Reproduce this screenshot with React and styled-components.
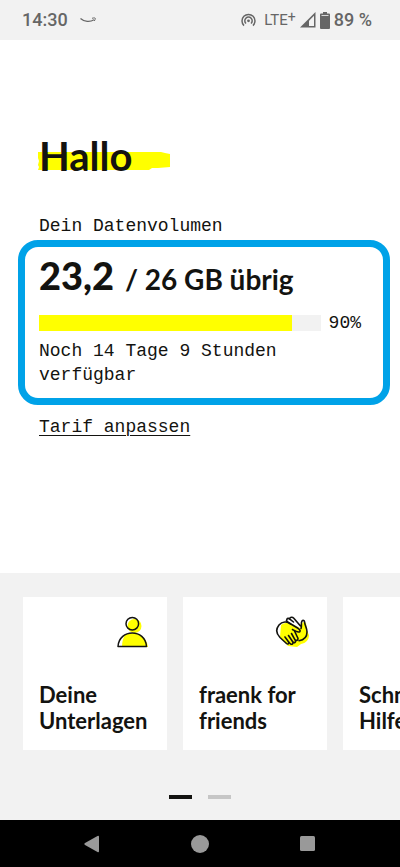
import React, { useState } from 'react'
import styled, { createGlobalStyle } from 'styled-components'

const colors = {
    ink: '#131310',
    brand: '#ffff00',
    grey: '#f2f2f2',
    status: '#666666',
    frame: '#00a2e8',
    nav: '#999999'
}

const display = `Lato, 'Open Sans', sans-serif`
const mono = `'Liberation Mono', 'DejaVu Sans Mono', monospace`

const GlobalStyle = createGlobalStyle`
    * {
        box-sizing: border-box;
    }

    body {
        margin: 0;
        background: #fff;
        color: ${colors.ink};
        font-family: ${mono};
    }

    h1, p {
        margin: 0;
    }

    button {
        border: 0;
        padding: 0;
        color: inherit;
        cursor: pointer;
    }
`

const Screen = styled.div`
    display: flex;
    flex-direction: column;
    min-height: 100vh;
    overflow: hidden;
`

const StatusBar = styled.header`
    display: flex;
    align-items: center;
    justify-content: space-between;
    height: 40px;
    padding: 0 28px 0 22px;
    background: ${colors.grey};
    color: ${colors.status};
    font: 500 18px/24px Roboto, sans-serif;
`

const StatusGroup = styled.div`
    display: flex;
    align-items: center;
    gap: ${({ $gap }) => $gap}px;
`

const Network = styled.span`
    margin-left: 4px;
    font-size: 15px;
    font-weight: 400;

    sup {
        font-size: 14px;
        line-height: 0;
        vertical-align: 3px;
    }
`

const Main = styled.main`
    flex: 1;
    padding: 94px 10px 0 18px;
`

const Title = styled.h1`
    position: relative;
    z-index: 0;
    margin-left: 21px;
    font: 700 40px/44px ${display};
`

const Marker = styled.svg`
    position: absolute;
    left: -2px;
    top: 17px;
    z-index: -1;
`

const Text = styled.p`
    font-size: 18px;
    line-height: 24px;
`

const Label = styled(Text)`
    margin: 36px 0 2px 21px;
`

const Usage = styled.section`
    padding: 8px 22px 11px 14px;
    border: 7px solid ${colors.frame};
    border-radius: 20px;
`

const Amount = styled.p`
    font: 700 28px/40px ${display};
    white-space: nowrap;

    strong {
        margin-right: 4px;
        font-size: 38px;
    }
`

const Meter = styled.div`
    display: flex;
    align-items: center;
    gap: 8px;
    margin: 12px 0 4px;
`

const Track = styled.div`
    flex: 1;
    height: 16px;
    background: ${colors.grey};
`

const Fill = styled.div`
    height: 100%;
    background: ${colors.brand};
`

const PlanLink = styled.a`
    display: inline-block;
    margin: 10px 0 0 21px;
    color: inherit;
    font-size: 18px;
    line-height: 24px;
    text-decoration: underline 1px;
    text-underline-offset: 3px;
`

const Shortcuts = styled.section`
    padding-top: 24px;
    background: ${colors.grey};
`

const Cards = styled.div`
    display: flex;
    gap: 16px;
    padding-left: 23px;
    overflow: hidden;
`

const Card = styled.button`
    display: flex;
    flex: none;
    flex-direction: column;
    justify-content: space-between;
    width: 144px;
    height: 153px;
    padding: 16px;
    background: #fff;
    font: 700 22px/26px ${display};
    text-align: left;

    svg {
        align-self: flex-end;
    }
`

const Pager = styled.div`
    display: flex;
    justify-content: center;
    gap: 16px;
    padding: 45px 0 21px;
`

const Page = styled.button`
    width: 23px;
    height: 4px;
    background: ${({ $active }) => ($active ? colors.ink : '#c6c6c6')};
`

const NavBar = styled.nav`
    display: flex;
    justify-content: space-around;
    align-items: center;
    height: 47px;
    padding: 0 39px;
    background: #000;
`

const NavButton = styled.button`
    display: flex;
    background: none;
`

const SmileIcon = () => (
    <svg width='17' height='7' viewBox='0 0 17 7' fill='none' stroke='currentColor'>
        <path d='M.5 1.500c4 3.500 9.500 3.800 13.500 1.300' strokeWidth='1.300' />
        <path d='M12 1.300c2-.6 3.300-.5 3.300.1s-.3 1.600-1 2.600' />
    </svg>
)

const HotspotIcon = () => (
    <svg width='15' height='14' viewBox='0 0 15 14' fill='none' stroke='currentColor' strokeWidth='1.500'>
        <path d='M3 12.600a6.500 6.500 0 1 1 9 0M5 10.500a3.700 3.700 0 1 1 5 0' />
        <circle cx='7.500' cy='7.800' r='1.400' fill='currentColor' stroke='none' />
    </svg>
)

const SignalIcon = () => (
    <svg width='16' height='16' viewBox='0 0 16 16'>
        <path d='M0 15.500L15.500 0v15.500z' fill='currentColor' />
        <path d='M9 8.700L14 3.700V14H9z' fill={colors.grey} />
    </svg>
)

const BatteryIcon = () => (
    <svg width='10' height='17' viewBox='0 0 10 17' fill='currentColor'>
        <path d='M3 0h4v1.500H9a1 1 0 0 1 1 1V16a1 1 0 0 1-1 1H1a1 1 0 0 1-1-1V2.500a1 1 0 0 1 1-1h2z' />
        <path d='M1.500 3h7v1h-7z' fill='#d8d8d8' />
    </svg>
)

const PersonIcon = () => (
    <svg width='36' height='36' viewBox='0 0 36 36'>
        <circle cx='19.500' cy='13' r='7' fill={colors.brand} />
        <path d='M10 22C18 18 31 21 33 34H7c0-5 1-9 3-12z' fill={colors.brand} />
        <g fill='none' stroke={colors.ink} strokeWidth='1.500' strokeLinejoin='round'>
            <circle cx='17.300' cy='10.700' r='6.300' />
            <path d='M3 33.500C4 15.500 30.500 15.500 31.500 33.500z' />
        </g>
    </svg>
)

const HandsIcon = () => (
    <svg width='36' height='36' viewBox='0 0 36 36'>
        <path
            d='M6 12c4-3 8-2 11-1l8 4 3-6 3 1 1 8 2 4c0 5-3 8-8 9l-4 3-9-1-8-9z'
            fill={colors.brand}
        />
        <g fill='none' stroke={colors.ink} strokeWidth='1.600' strokeLinecap='round' strokeLinejoin='round'>
            <path d='M15.500 11C12.500 8 7 8.500 4 12 .5 16.500 1.500 21 5 24.500l6.500 6c1.500 1.200 3-.2 2-1.800L10 24' />
            <path d='M13.500 29l2 1.800c1.500 1.200 3.200-.3 2.200-2L13.500 22.500M17.700 29c2 1.500 3.500-.1 2.600-1.700L16.500 20.500M20.300 27c2 1 3.300-.5 2.500-2L19.500 18' />
            <path d='M17.500 16.500c2.500 1.500 5.500 3.500 7.200 2.300 1.300-1.100-.4-2.600-1.700-3.500L12.500 9c-2.200-2 .2-4.700 2-3.200l4 3.200' />
            <path d='M14.500 5.800c.8-2 3-2 4.300-.6l6.700 7.800M26 15.500c1.200-2.200-.5-5.500 1-7.500 1-1.200 2.500-.5 2.600 1 .1 3.200 2.400 6 2.400 10 0 5-3.200 8-8 8.700' />
        </g>
    </svg>
)

const shortcuts = [
    { title: 'Deine Unterlagen', Icon: PersonIcon },
    { title: 'fraenk for friends', Icon: HandsIcon },
    { title: 'Schnelle Hilfe' }
]

const App = () => {

    const [page, setPage] = useState(0)
    const percent = 90

    return (
        <Screen>
            <GlobalStyle />
            <StatusBar>
                <StatusGroup $gap={12}>
                    <span>14:30</span>
                    <SmileIcon />
                </StatusGroup>
                <StatusGroup $gap={4}>
                    <HotspotIcon />
                    <Network>LTE<sup>+</sup></Network>
                    <SignalIcon />
                    <BatteryIcon />
                    <span>89 %</span>
                </StatusGroup>
            </StatusBar>

            <Main>
                <Title>
                    <Marker width='134' height='20' viewBox='0 0 134 20'>
                        <path
                            d='M1 1h123l4 1 5 1v13l-12 1h-6l-3 2H1l1-3-1-2 1-4-1-3z'
                            fill={colors.brand}
                        />
                    </Marker>
                    Hallo
                </Title>
                <Label>Dein Datenvolumen</Label>
                <Usage>
                    <Amount><strong>23,2</strong> / 26 GB übrig</Amount>
                    <Meter>
                        <Track
                            role='progressbar'
                            aria-label='Datenvolumen'
                            aria-valuenow={percent}
                        >
                            <Fill style={{ width: `${percent}%` }} />
                        </Track>
                        <Text as='span'>{percent}%</Text>
                    </Meter>
                    <Text>Noch 14 Tage 9 Stunden verfügbar</Text>
                </Usage>
                <PlanLink href='#tarif'>Tarif anpassen</PlanLink>
            </Main>

            <Shortcuts>
                <Cards>
                    {shortcuts.map(({ title, Icon }) => (
                        <Card key={title} type='button'>
                            {Icon ? <Icon /> : <span />}
                            <span>{title}</span>
                        </Card>
                    ))}
                </Cards>
                <Pager>
                    {[0, 1].map(p => (
                        <Page
                            key={p}
                            type='button'
                            aria-label={`Seite ${p + 1}`}
                            $active={p === page}
                            onClick={() => setPage(p)}
                        />
                    ))}
                </Pager>
            </Shortcuts>

            <NavBar>
                <NavButton type='button' aria-label='Zurück'>
                    <svg width='16' height='18' viewBox='0 0 16 18' fill={colors.nav}>
                        <path d='M1 8L13.500 1q1.500-.7 1.500 1v14q0 1.700-1.500 1L1 10q-1.300-1 0-2z' />
                    </svg>
                </NavButton>
                <NavButton type='button' aria-label='Startseite'>
                    <svg width='18' height='18' viewBox='0 0 18 18' fill={colors.nav}>
                        <circle cx='9' cy='9' r='9' />
                    </svg>
                </NavButton>
                <NavButton type='button' aria-label='Übersicht'>
                    <svg width='16' height='16' viewBox='0 0 16 16' fill={colors.nav}>
                        <rect width='15' height='15' rx='1.500' />
                    </svg>
                </NavButton>
            </NavBar>
        </Screen>
    )
}

export default App
